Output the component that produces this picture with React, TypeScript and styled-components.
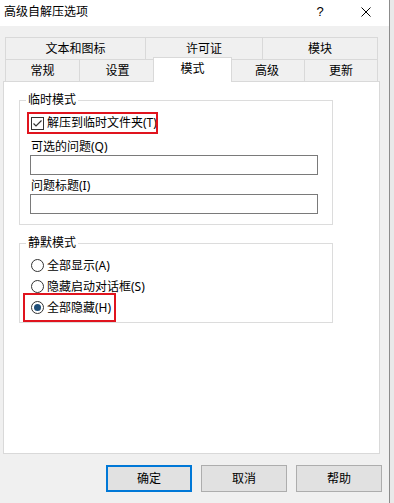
import React from "react";
import styled, { createGlobalStyle, css } from "styled-components";

const GlobalStyle = createGlobalStyle`
    html,
    body {
        margin: 0;
        padding: 0;
        background: #e9e9e9;
    }

    body {
        font-family: "Noto Sans", "Noto Sans CJK SC", sans-serif;
        font-size: 12px;
        color: #000;
    }

    * {
        box-sizing: border-box;
    }
`;

const Screen = styled.div`
    display: flex;
    width: 394px;
    height: 503px;
    overflow: hidden;
`;

const Window = styled.div`
    flex: none;
    width: 390px;
    height: 100%;
    display: flex;
    flex-direction: column;
    background: #f0f0f0;
    border-right: 1px solid #8c8c8c;
`;

const TitleBar = styled.div`
    flex: none;
    height: 26px;
    display: flex;
    align-items: center;
    background: #fff;
`;

const Title = styled.span`
    padding: 0 0 3px 4px;
    line-height: 16px;
    flex: 1;
`;

const CaptionButton = styled.span`
    width: 46px;
    height: 26px;
    display: flex;
    align-items: center;
    justify-content: center;
    font-family: "Liberation Sans", sans-serif;
    font-size: 13px;
    padding-bottom: 3px;
`;

const TabStrip = styled.div`
    margin: 11px 0 0 5px;
    width: 373px;
`;

const TabRow = styled.div`
    display: flex;
    align-items: flex-start;
    height: 22px;
`;

const Tab = styled.div<{ $w: number; $selected?: boolean }>`
    position: relative;
    flex: none;
    width: ${p => p.$w}px;
    height: 22px;
    margin-left: -1px;
    display: flex;
    align-items: center;
    justify-content: center;
    border: 1px solid #d9d9d9;
    border-bottom: none;
    background: #f0f0f0;
    line-height: 16px;

    &:first-child {
        margin-left: 0;
    }

    ${p =>
        p.$selected &&
        css`
            z-index: 2;
            height: 25px;
            margin: -2px -2px 0 -3px;
            padding-bottom: 2px;
            background: #fff;
        `}
`;

const Panel = styled.div`
    margin-left: 3px;
    width: 377px;
    height: 373px;
    background: #fff;
    border: 1px solid #d9d9d9;
    padding: 10px 0 0 15px;
`;

const Group = styled.fieldset<{ $h: number; $gap?: number }>`
    margin: ${p => p.$gap ?? 0}px 0 0 0;
    width: 314px;
    height: ${p => p.$h}px;
    border: 1px solid #dcdcdc;
    padding: 0 0 0 10px;
    display: flex;
    flex-direction: column;
    align-items: flex-start;
`;

const GroupTitle = styled.legend`
    margin-left: -4px;
    padding: 0 2px;
    line-height: 16px;
    font-size: 12px;
`;

const OptionRow = styled.label<{ $h: number; $top?: number }>`
    position: relative;
    display: inline-flex;
    align-items: center;
    gap: 3px;
    height: ${p => p.$h}px;
    margin-top: ${p => p.$top ?? 0}px;
    padding-left: 1px;
    line-height: 16px;
    white-space: nowrap;
`;

// red annotation frame drawn over an option
const Highlight = styled.span<{ $t: number; $l: number; $r: number; $b: number }>`
    position: absolute;
    top: ${p => p.$t}px;
    left: ${p => p.$l}px;
    right: ${p => p.$r}px;
    bottom: ${p => p.$b}px;
    border: 2px solid #e0141e;
    pointer-events: none;
`;

const CheckBox = styled.span`
    flex: none;
    width: 13px;
    height: 13px;
    border: 1px solid #333;
    background: #fff;
    display: flex;
`;

const Radio = styled.span<{ $on?: boolean }>`
    flex: none;
    width: 13px;
    height: 13px;
    border-radius: 50%;
    border: 1px solid #333;
    background: #fff;
    display: flex;
    align-items: center;
    justify-content: center;

    &::after {
        content: "";
        width: 7px;
        height: 7px;
        border-radius: 50%;
        background: ${p => (p.$on ? "#1f4e79" : "transparent")};
    }
`;

const FieldLabel = styled.div<{ $top: number }>`
    margin-top: ${p => p.$top}px;
    padding-left: 1px;
    line-height: 16px;
`;

const TextBox = styled.div`
    width: 288px;
    height: 20px;
    border: 1px solid #7a7a7a;
    background: #fff;
`;

const ButtonBar = styled.div`
    display: flex;
    justify-content: flex-end;
    gap: 9px;
    margin-top: 11px;
    padding-right: 7px;
`;

const Button = styled.button<{ $default?: boolean }>`
    width: 86px;
    height: 27px;
    padding: 0 0 2px;
    font: inherit;
    color: #000;
    background: #e1e1e1;
    border: 1px solid #adadad;

    ${p =>
        p.$default &&
        css`
            border: 2px solid #0078d7;
        `}
`;

const CloseIcon = () => (
    <svg width="10" height="10" viewBox="0 0 10 10">
        <path d="M0.5 0.5L9.5 9.5M9.5 0.5L0.5 9.5" stroke="#000" strokeWidth="1" />
    </svg>
);

const CheckMark = () => (
    <svg width="11" height="11" viewBox="0 0 11 11">
        <path d="M1.5 5.5L4 8L9.5 2.5" fill="none" stroke="#333" strokeWidth="1.2" />
    </svg>
);

const topTabs = [
    { label: "文本和图标", w: 141 },
    { label: "许可证", w: 118 },
    { label: "模块", w: 116 },
];

const bottomTabs = [
    { label: "常规", w: 75 },
    { label: "设置", w: 77 },
    { label: "模式", w: 79, selected: true },
    { label: "高级", w: 76 },
    { label: "更新", w: 74 },
];

const radios = [
    { label: "全部显示(A)" },
    { label: "隐藏启动对话框(S)" },
    { label: "全部隐藏(H)", on: true },
];

export default function App() {
    return (
        <Screen>
            <GlobalStyle />
            <Window>
                <TitleBar>
                    <Title>高级自解压选项</Title>
                    <CaptionButton>?</CaptionButton>
                    <CaptionButton>
                        <CloseIcon />
                    </CaptionButton>
                </TitleBar>

                <TabStrip>
                    <TabRow>
                        {topTabs.map(t => (
                            <Tab key={t.label} $w={t.w}>
                                {t.label}
                            </Tab>
                        ))}
                    </TabRow>
                    <TabRow>
                        {bottomTabs.map(t => (
                            <Tab key={t.label} $w={t.w} $selected={t.selected}>
                                {t.label}
                            </Tab>
                        ))}
                    </TabRow>
                </TabStrip>

                <Panel>
                    <Group $h={133}>
                        <GroupTitle>临时模式</GroupTitle>
                        <OptionRow $h={22} $top={4}>
                            <CheckBox>
                                <CheckMark />
                            </CheckBox>
                            解压到临时文件夹(T)
                            <Highlight $t={0} $l={-3} $r={-1} $b={0} />
                        </OptionRow>
                        <FieldLabel $top={5}>可选的问题(Q)</FieldLabel>
                        <TextBox />
                        <FieldLabel $top={3}>问题标题(I)</FieldLabel>
                        <TextBox />
                    </Group>

                    <Group $h={88} $gap={10}>
                        <GroupTitle>静默模式</GroupTitle>
                        {radios.map((r, i) => (
                            <OptionRow key={r.label} $h={21} $top={i === 0 ? 4 : 0}>
                                <Radio $on={r.on} />
                                {r.label}
                                {r.on && <Highlight $t={-4} $l={-7} $r={-5} $b={-4} />}
                            </OptionRow>
                        ))}
                    </Group>
                </Panel>

                <ButtonBar>
                    <Button $default>确定</Button>
                    <Button>取消</Button>
                    <Button>帮助</Button>
                </ButtonBar>
            </Window>
        </Screen>
    );
}
